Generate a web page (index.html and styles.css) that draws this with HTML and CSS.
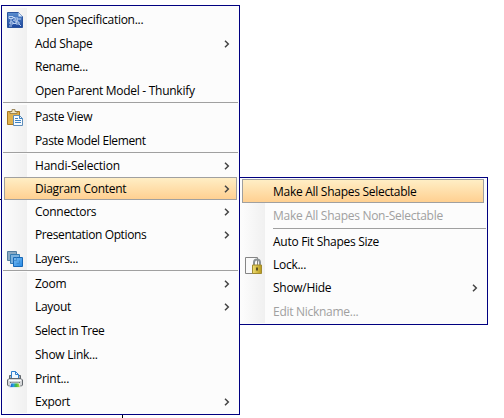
FILE: index.html
```html
<!DOCTYPE html>
<html lang="en">
<head>
<meta charset="utf-8">
<title>Diagram menu</title>
<link rel="stylesheet" href="styles.css">
</head>
<body>
<svg width="0" height="0" class="defs">
  <defs>
    <symbol id="chev" viewBox="0 0 6 8"><path d="M1 .8 4.300 4 1 7.200" fill="none" stroke="#444" stroke-width="1.500"/></symbol>
    <linearGradient id="blue" x1="0" y1="0" x2="0" y2="1"><stop stop-color="#5b8fd0"/><stop offset="1" stop-color="#1c459c"/></linearGradient>
    <linearGradient id="sky" x1="0" y1="0" x2="1" y2="1"><stop stop-color="#7fbdf0"/><stop offset="1" stop-color="#2389e6"/></linearGradient>
    <linearGradient id="gold" x1="0" y1="0" x2="1" y2="0"><stop stop-color="#efdf74"/><stop offset="1" stop-color="#b79818"/></linearGradient>
    <linearGradient id="rainbow"><stop stop-color="#1746c8"/><stop offset=".35" stop-color="#28a0e0"/><stop offset=".6" stop-color="#3cb842"/><stop offset="1" stop-color="#d5df3c"/></linearGradient>
  </defs>
</svg>
<div class="edge-left"></div>
<div class="edge-bottom"></div>
<main class="menus">
  <div class="menu main">
    <div class="group">
      <div class="item"><svg class="icon" viewBox="0 0 16 16"><path d="M.5.5h11l4 4v11H.5z" fill="url(#blue)" stroke="#2c559f"/><path d="M11.500.5v4h4z" fill="#dce9fa"/><path d="M2 4.500h4v2H2zM8 6h3v2H8zM3 10h3v2H3zM9 10h3v2H9zM6 5.500h2M4 7v3M6 11.500h3M10 8v2M6 8l4 2M2 14h3M12 12l2 2M12 7h2" fill="none" stroke="#c9dcf7" stroke-width=".9"/></svg><span>Open Specification...</span></div>
      <div class="item short"><span>Add Shape</span><svg class="chev"><use href="#chev"/></svg></div>
      <div class="item"><span>Rename...</span></div>
      <div class="item short"><span>Open Parent Model - Thunkify</span></div>
    </div>
    <hr class="first">
    <div class="group">
      <div class="item"><svg class="icon tall" viewBox="0 0 16 17"><path d="M.5 2.500h12v13H.5z" fill="#e0b04c" stroke="#a87824"/><path d="M3 4.500h7v-2H8v-2H5v2H3z" fill="#f3e8c4" stroke="#8b7441" stroke-width=".8"/><path d="M6.500 6.500h6l3 3v7h-9z" fill="#f6fafe" stroke="#5e8db9"/><path d="M12.500 6.500v3h3M8 9.500h3M8 11.500h6M8 13.500h6" fill="none" stroke="#3f83c4"/></svg><span>Paste View</span></div>
      <div class="item short"><span class="tight">Paste Model Element</span></div>
    </div>
    <hr>
    <div class="group">
      <div class="item short"><span class="loose">Handi-Selection</span><svg class="chev"><use href="#chev"/></svg></div>
      <div class="item short active"><span>Diagram Content</span><svg class="chev"><use href="#chev"/></svg></div>
      <div class="item short"><span>Connectors</span><svg class="chev"><use href="#chev"/></svg></div>
      <div class="item short"><span class="tight">Presentation Options</span><svg class="chev"><use href="#chev"/></svg></div>
      <div class="item lower"><svg class="icon" viewBox="0 0 16 16"><path d="M.5.5h9v9h-9z" fill="#8ba9c2" stroke="#557e9f"/><path d="M3.500 3.500h9v9h-9z" fill="#7db2de" stroke="#347bb2"/><path d="M6.500 6.500h9v9h-9z" fill="url(#sky)" stroke="#1768b7"/><path d="M6.500 9.500h3v-3M9.500 12.500h3v-3" fill="none" stroke="#3c88c8" stroke-width=".8"/></svg><span>Layers...</span></div>
    </div>
    <hr>
    <div class="group">
      <div class="item short"><span>Zoom</span><svg class="chev"><use href="#chev"/></svg></div>
      <div class="item"><span>Layout</span><svg class="chev"><use href="#chev"/></svg></div>
      <div class="item"><span class="tight">Select in Tree</span></div>
      <div class="item"><span>Show Link...</span></div>
      <div class="item"><svg class="icon tall" viewBox="0 0 16 17"><path d="M2.500 4.500h11v4h-11z" fill="#a9adb0" stroke="#62676c"/><path d="M4.500 7.500v-7h4l3 3v4z" fill="#eff8ff" stroke="#2f80d0"/><path d="M8.500.5v3h3" fill="none" stroke="#2f80d0"/><path d="M2 7.500h12l1.500 1.500v5l-1 1h-13l-1-1V9z" fill="#d4d6d8" stroke="#62676c"/><path d="M2 9.500h12" stroke="#fff"/><path d="M3 11.500h10" stroke="#686d72"/><path d="M4 12h8l1.300 4.500H2.700z" fill="url(#rainbow)" stroke="#eef4f8" stroke-width=".8"/></svg><span>Print...</span></div>
      <div class="item end"><span>Export</span><svg class="chev"><use href="#chev"/></svg></div>
    </div>
  </div>
  <div class="menu sub">
    <div class="item active"><span>Make All Shapes Selectable</span></div>
    <div class="group">
      <div class="item lower disabled"><span>Make All Shapes Non-Selectable</span></div>
      <hr>
      <div class="item lower"><span>Auto Fit Shapes Size</span></div>
      <div class="item short snug"><svg class="icon" viewBox="0 0 17 17"><path d="M.5.5h12v16H.5z" fill="#fafafa" stroke="#858585"/><path d="M9 9V5.500a3 3 0 0 1 6 0V9" fill="none" stroke="#8b9294" stroke-width="2"/><path d="M7.500 8h9v8.500h-9z" fill="url(#gold)" stroke="#a08a30"/><path d="M11.200 10.500h1.600v3h-1.600z" fill="#3d3516"/></svg><span>Lock...</span></div>
      <div class="item"><span>Show/Hide</span><svg class="chev"><use href="#chev"/></svg></div>
      <div class="item short snug disabled"><span>Edit Nickname...</span></div>
    </div>
  </div>
</main>
</body>
</html>
```

FILE: styles.css
```css
* { box-sizing: border-box; }
body { margin: 0; background: #fff; width: 504px; height: 418px; overflow: hidden; font: 12px/20px "Open Sans", "Noto Sans", sans-serif; letter-spacing: -0.28px; color: #000; }
.defs { position: absolute; }
.edge-left, .edge-bottom { position: absolute; background: #000; }
.edge-left { left: 0; top: 199px; width: 1px; height: 1px; }
.edge-bottom { left: 122px; top: 415px; width: 1px; height: 3px; }
.menus { display: flex; align-items: flex-start; padding: 5px 0 0 1px; }
.menu { border: 1px solid #000080; background: #fcfcfc; }
.main { width: 239px; height: 410px; padding: 2px 1px 0; }
.sub { width: 249px; height: 148px; margin: 172px 0 0 -1px; padding: 1px 1px 0 2px; }
.group { background: linear-gradient(90deg, #fcfcfc, #f0f0f0) 0 0 / 24px 100% no-repeat; }
.item { height: 24px; display: grid; grid-template-columns: 32px 1fr 14px; align-items: center; white-space: nowrap; }
.item.short { height: 23px; }
.item.end { height: 22px; }
.item span { grid-column: 2; grid-row: 1; }
hr ~ .group .short, .snug { padding-top: 1px; }
.lower { padding-top: 2px; }
.tight { letter-spacing: -0.38px; }
.loose { letter-spacing: -0.2px; }
.icon { width: 16px; height: 16px; margin-left: 4px; grid-column: 1; grid-row: 1; }
.icon.tall { height: 17px; }
.chev { width: 6px; height: 8px; grid-column: 3; grid-row: 1; }
hr { border: 0; height: 1px; margin: 0 0 1px; background: #a0a0a0; }
hr.first { margin-bottom: 2px; }
.main .active { margin: 0 1px; grid-template-columns: 30px 1fr 12px; }
.active { border: 1px solid #a0a0a0; background: linear-gradient(#ffeec5, #ffd091); }
.sub .item { grid-template-columns: 31px 1fr 14px; }
.sub .active { margin-right: 2px; padding-top: 1px; grid-template-columns: 30px 1fr 12px; }
.sub .group { background-size: 23px 100%; }
.sub hr { margin: 1px 0 0 31px; }
.sub .icon { margin-left: 3px; width: 17px; height: 17px; }
.disabled { color: #a0a0a0; }
```
